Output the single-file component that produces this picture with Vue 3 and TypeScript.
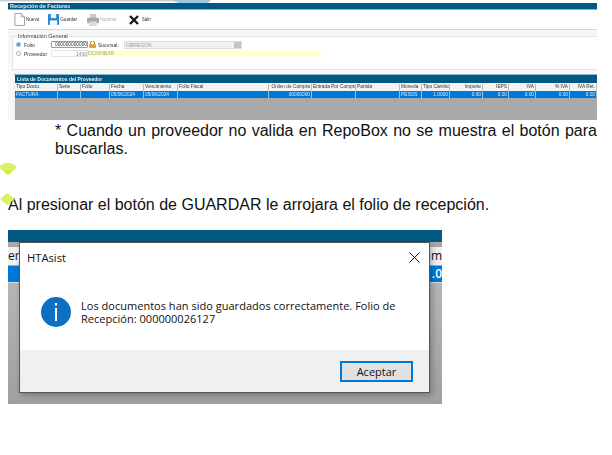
<script setup lang="ts">
interface Col { label: string; width: number; value: string; right?: boolean }
const columns: Col[] = [
  { label: 'Tipo Docto.', width: 43, value: 'FACTURA' },
  { label: 'Serie', width: 23, value: '' },
  { label: 'Folio', width: 29, value: '' },
  { label: 'Fecha', width: 34, value: '05/06/2024' },
  { label: 'Vencimiento', width: 34, value: '05/06/2024' },
  { label: 'Folio Fiscal', width: 91, value: '' },
  { label: 'Orden de Compra', width: 43, value: '00000000', right: true },
  { label: 'Entrada Por Compra', width: 44, value: '' },
  { label: 'Partida', width: 44, value: '' },
  { label: 'Moneda', width: 22, value: 'PESOS' },
  { label: 'Tipo Cambio', width: 28, value: '1.0000', right: true },
  { label: 'Importe', width: 33, value: '0.00', right: true },
  { label: 'IEPS', width: 26, value: '0.00', right: true },
  { label: 'IVA', width: 27, value: '0.00', right: true },
  { label: '% IVA', width: 34, value: '0.00', right: true },
  { label: 'IVA Ret.', width: 27, value: '0.00', right: true }
]
const gridTemplate = columns.map(c => `${c.width}px`).join(' ')
</script>

<template>
  <div class="page">
    <svg class="topstrip" width="612" height="3" viewBox="0 0 612 3">
      <rect x="0" y="0" width="176" height="1.4" fill="#c9ccd0" />
      <polygon points="173,0 211,0 208,3 178,3" fill="#9cc8e6" />
    </svg>

    <section class="shot">
      <div class="titlebar">Recepción de Facturas</div>
      <div class="toolbar">
        <div class="tool">
          <svg width="11" height="13" viewBox="0 0 12 14"><path d="M1 .5h7l3.500 3.500v9.500h-10.500z" fill="#fff" stroke="#9a9a9a" /><path d="M8 .5v3.500h3.500" fill="#eee" stroke="#9a9a9a" /></svg>
          <span>Nuevo</span>
        </div>
        <div class="tool save">
          <svg width="11" height="11" viewBox="0 0 12 12"><rect width="12" height="12" rx="1" fill="#2b86c9" /><rect x="3" y="0" width="6" height="4.500" fill="#e8f2fa" /><rect x="2" y="7" width="8" height="5" fill="#f4f8fb" /></svg>
          <span>Guardar</span>
        </div>
        <div class="tool print">
          <svg width="12" height="12" viewBox="0 0 13 13"><rect x="3" y="0" width="7" height="5" fill="#c9c9c9" /><rect y="4" width="13" height="6" rx="1" fill="#a8a8a8" /><rect x="2.500" y="8" width="8" height="5" fill="#dcdcdc" /></svg>
          <span>Imprimir</span>
        </div>
        <div class="tool exit">
          <svg width="10" height="10" viewBox="0 0 10 10"><path d="M1 1l8 8M9 1l-8 8" stroke="#1a1a1a" stroke-width="2.400" /></svg>
          <span>Salir</span>
        </div>
      </div>

      <fieldset class="general">
        <legend>Información General</legend>
        <div class="formrow">
          <span class="radio on"></span>
          <span class="lbl">Folio</span>
          <span class="input folio">000000000000</span>
          <svg class="lock" width="7" height="7" viewBox="0 0 7 7"><path d="M1.500 3V2a2 2 0 0 1 4 0v1" fill="none" stroke="#a58a3c" /><rect y="3" width="7" height="4" rx="1" fill="#d5a83f" /></svg>
          <span class="lbl suc">Sucursal:</span>
          <span class="select">OBREGON<i></i></span>
        </div>
        <div class="formrow">
          <span class="radio"></span>
          <span class="lbl">Proveedor</span>
          <span class="input prov">1430</span>
          <span class="provname">DCINNBAR</span>
        </div>
      </fieldset>

      <div class="listpanel">
        <div class="listtitle">Lista de Documentos del Proveedor</div>
        <div class="grid head" :style="{ gridTemplateColumns: gridTemplate }">
          <span v-for="c in columns" :key="c.label" :class="{ right: c.right }">{{ c.label }}</span>
        </div>
        <div class="grid row" :style="{ gridTemplateColumns: gridTemplate }">
          <span v-for="c in columns" :key="c.label" :class="{ right: c.right }">{{ c.value }}</span>
        </div>
        <div class="gray"></div>
      </div>
    </section>

    <p class="note">* Cuando un proveedor no valida en RepoBox no se muestra el botón para buscarlas.</p>

    <div class="spacer">
      <svg class="bullet b1" width="16" height="12" viewBox="0 0 16 12"><path d="M0 5L8 0l8 5-8 7z" fill="#bff60a" /><ellipse cx="8" cy="4" rx="8" ry="4" fill="#d9f26a" /></svg>
    </div>

    <p class="line">
      <svg class="bullet b2" width="16" height="12" viewBox="0 0 16 12"><path d="M0 6L7 0l8 6-8 6z" fill="#d6f25c" /></svg>
      Al presionar el botón de GUARDAR le arrojara el folio de recepción.
    </p>

    <div class="capture">
      <div class="c-teal"></div>
      <div class="c-head"><span>er</span><span>am</span></div>
      <div class="c-row"><span></span><span>.0</span></div>
      <div class="c-gray"></div>

      <div class="dialog">
        <div class="d-title">
          <span>HTAsist</span>
          <svg width="11" height="11" viewBox="0 0 11 11"><path d="M.5.5l10 10M10.500.5l-10 10" stroke="#111" stroke-width="1" /></svg>
        </div>
        <div class="d-body">
          <svg class="info" width="30" height="30" viewBox="0 0 30 30">
            <circle cx="15" cy="15" r="15" fill="#0b6fc2" />
            <rect x="14" y="6" width="2" height="2.500" fill="#fff" />
            <rect x="14" y="11" width="2" height="13" fill="#fff" />
          </svg>
          <p>Los documentos han sido guardados correctamente. Folio de Recepción: 000000026127</p>
        </div>
        <div class="d-foot">
          <button type="button">Aceptar</button>
        </div>
      </div>
    </div>
  </div>
</template>

<style>
html, body { margin: 0; background: #fff; }
</style>

<style scoped>
.page { width: 612px; height: 455px; overflow: hidden; position: relative; background: #fff; font-family: "Liberation Sans", Arial, sans-serif; color: #111; }
.topstrip { display: block; }

.shot { width: 589px; height: 117px; margin-left: 8px; overflow: hidden; background: #f7f7f7; filter: blur(.4px); font-size: 5px; color: #333; }
.titlebar { height: 6px; line-height: 6px; padding-left: 2px; background: #005a84; color: #e6eef3; font-weight: 700; font-size: 5.500px; border-bottom: 1px solid #7fb0c8; }
.toolbar { height: 19px; background: #fff; border-bottom: 1px solid #d4d4d4; display: flex; align-items: center; padding-left: 6px; }
.tool { display: flex; align-items: center; gap: 1px; }
.tool span { font-size: 4.600px; }
.save { margin-left: 9px; }
.print { margin-left: 10px; color: #aaa; }
.exit { margin-left: 12px; gap: 3px; }

.general { margin: 4px 0 0 4px; padding: 1px 0 0 3px; height: 36px; box-sizing: border-box; background: #fff; border: 1px solid #e2e2e2; border-right: 0; min-width: 0; }
.general legend { padding: 0 1px; margin-left: 1px; font-size: 5.500px; line-height: 5px; }
.formrow { display: flex; align-items: center; height: 9px; }
.radio { width: 5px; height: 5px; border-radius: 50%; border: 1px solid #8fb6cd; box-sizing: border-box; }
.radio.on { background: #6ea6c9; }
.lbl { margin-left: 3px; width: 27px; }
.input { height: 7px; line-height: 6px; box-sizing: border-box; text-align: right; border: 1px solid #e4e4e4; background: #fff; white-space: nowrap; overflow: hidden; }
.folio { width: 37px; line-height: 5px; border-color: #999; border-radius: 1px; font-size: 4.800px; }
.lock { margin-left: 1px; }
.lbl.suc { margin-left: 2px; width: 26px; }
.select { width: 118px; height: 8px; line-height: 6px; box-sizing: border-box; padding-left: 1px; border: 1px solid #ddd; background: #f2f2f2; color: #999; position: relative; }
.select i { position: absolute; right: 0; top: 0; width: 7px; height: 6px; background: #c4c4c4; }
.prov { width: 37px; color: #888; }
.provname { width: 233px; height: 7px; line-height: 7px; background: #ffffdc; color: #a9a27a; }

.listpanel { margin: 4px 0 0 6px; background: #f2f2f2; border-top: 1px solid #8ab4c9; height: 46px; }
.listtitle { height: 8px; line-height: 8px; padding-left: 2px; background: #005a84; color: #e6eef3; font-weight: 700; margin-left: 1px; }
.grid { display: grid; margin-left: 1px; }
.grid span { padding: 0 1px; overflow: hidden; white-space: nowrap; box-sizing: border-box; border-right: 1px solid #bbb; line-height: 6px; font-size: 4.800px; }
.grid .right { text-align: right; }
.head { height: 7px; background: #f3f3f3; margin-top: 1px; }
.row { height: 7px; background: #0078d7; color: #d8ecfa; }
.row span { border-right-color: #8fc3ec; line-height: 7px; }
.gray { height: 30px; margin-left: 1px; background: #a9a9a9; }

.note { width: 542px; margin: 2px 0 0 55px; font-size: 16px; line-height: 18px; text-align: justify; color: #111; }
.spacer { height: 27px; position: relative; }
.bullet { position: absolute; }
.b1 { left: 0; top: 5px; }
.line { margin: 11px 0 0; padding-left: 8px; height: 19px; position: relative; font-size: 16px; line-height: 18px; color: #111; }
.b2 { left: 0; top: -3px; }

.capture { width: 434px; height: 174px; margin: 15px 0 0 8px; position: relative; display: flex; flex-direction: column; background: #a9a9a9; font-family: "Open Sans", sans-serif; }
.c-teal { height: 12px; background: #005a84; }
.c-head { height: 18px; margin-top: 5px; background: #f0f0f0; display: flex; justify-content: space-between; font-size: 12px; line-height: 17px; }
.c-row { height: 16px; margin-top: 1px; background: #0078d7; border-bottom: 1px solid #dcdcdc; display: flex; justify-content: space-between; color: #fff; font-size: 12px; font-weight: 600; line-height: 16px; }
.c-gray { flex: 1; background: linear-gradient(#b5b5b5, #a0a0a0); }

.dialog { position: absolute; left: 11px; top: 12px; width: 411px; height: 151px; box-sizing: border-box; border: 1px solid #555; background: #fff; display: flex; flex-direction: column; box-shadow: 2px 2px 6px rgba(0,0,0,.28); }
.d-title { height: 28px; display: flex; align-items: center; justify-content: space-between; padding: 0 9px 0 7px; font-size: 11.200px; color: #111; }
.d-body { flex: 1; display: flex; align-items: flex-start; padding: 26px 16px 0 21px; gap: 10px; }
.info { flex: none; }
.d-body p { margin: 0; font-size: 11px; line-height: 13px; padding-top: 2px; letter-spacing: .02px; color: #111; }
.d-foot { height: 42px; background: #f0f0f0; display: flex; justify-content: flex-end; padding: 11px 16px 0 0; box-sizing: border-box; }
.d-foot button { width: 73px; height: 21px; box-sizing: border-box; padding: 0; border: 2px solid #0078d7; background: #e1e1e1; font-family: "Open Sans", sans-serif; font-size: 11px; color: #111; }
</style>
